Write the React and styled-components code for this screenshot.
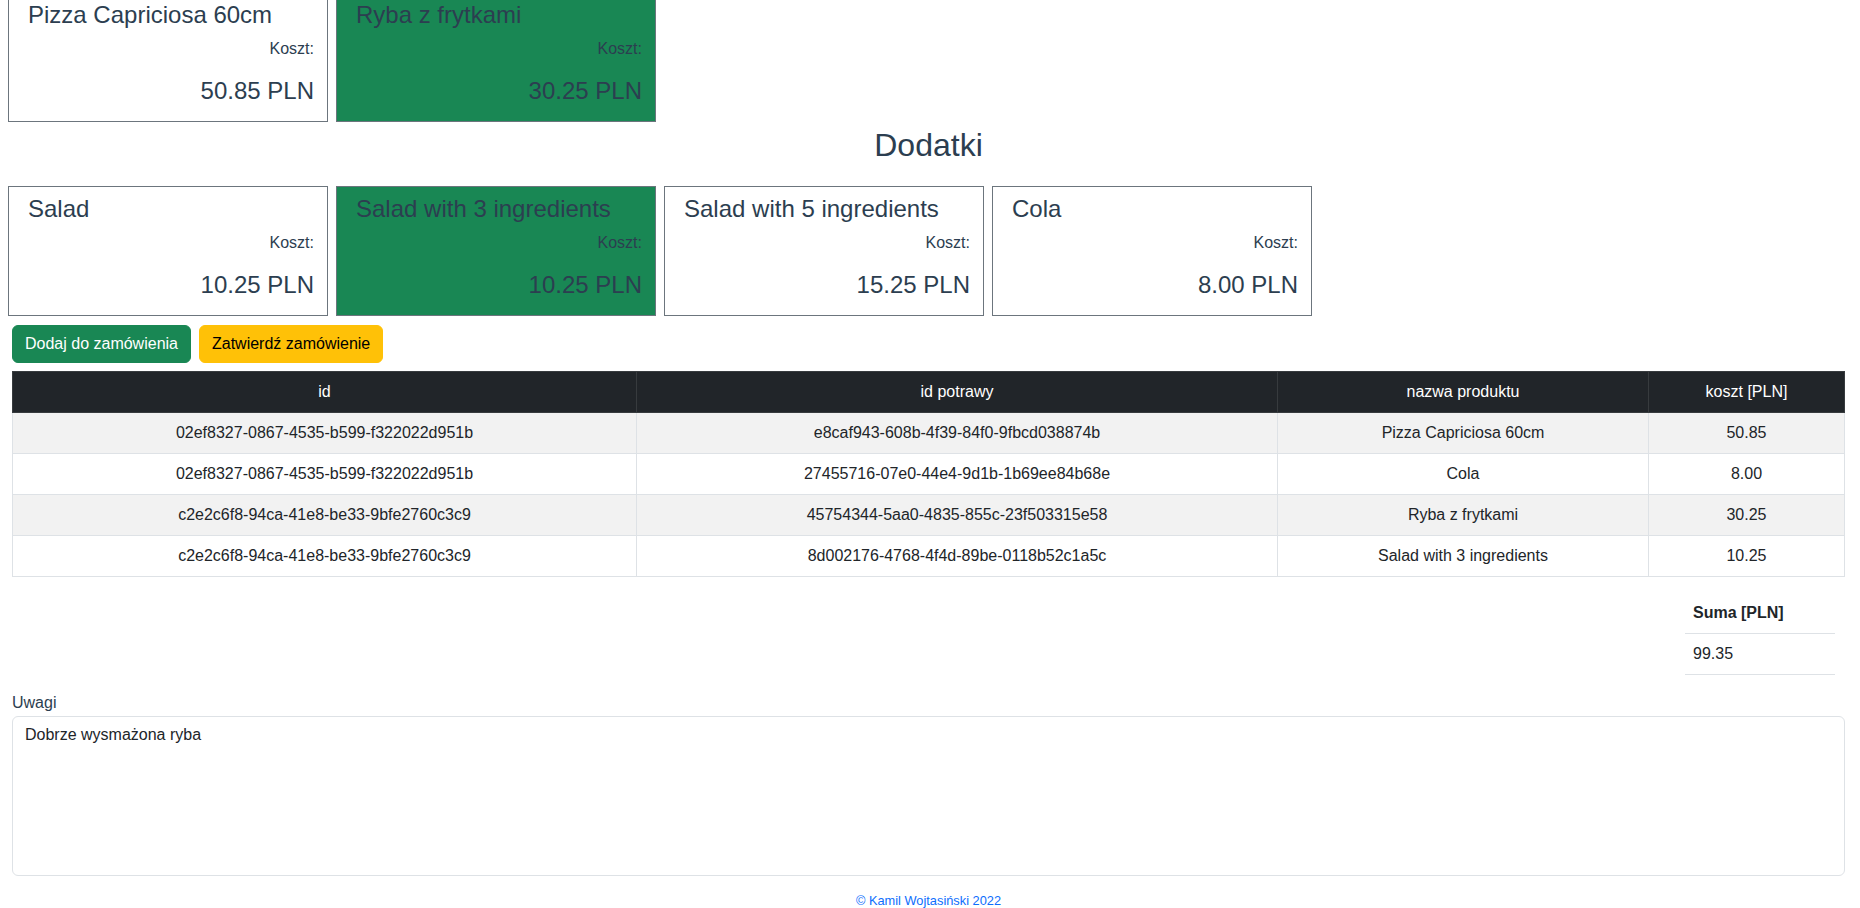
import React from "react";
import styled, { createGlobalStyle } from "styled-components";

const GlobalStyle = createGlobalStyle`
  *, *::before, *::after { box-sizing: border-box; }
  html, body {
    margin: 0;
    padding: 0;
    overflow: hidden;
    background: #fff;
  }
  body {
    font-family: "Liberation Sans", Arial, Helvetica, sans-serif;
    font-size: 16px;
    line-height: 1.5;
    color: #212529;
  }
  table { font-family: inherit; font-size: inherit; }
`;

const Page = styled.div`
  /* view is scrolled slightly: first row of cards starts above the fold */
  margin-top: -8px;
  padding: 0 15px 0 12px;
  color: #2c3e50;
  text-align: center;
`;

const CardRow = styled.div`
  display: flex;
  flex-wrap: wrap;
  gap: 8px;
  margin: 0 -4px 4px;
`;

const Card = styled.div`
  width: 320px;
  height: 130px;
  border: 1px solid #6c757d;
  background: ${(p) => (p.$selected ? "#198754" : "#ffffff")};
  padding: 8px 13px 0;
  text-align: left;
  color: #2c3e50;
  cursor: pointer;
`;

const CardTitle = styled.h4`
  margin: 0 0 0 6px;
  font-size: 24px;
  line-height: 28.8px;
  font-weight: 400;
  white-space: nowrap;
`;

const CostLabel = styled.p`
  margin: 7.4px 0 0;
  text-align: right;
  font-size: 16px;
  line-height: 24px;
`;

const Price = styled.p`
  margin: 12px 0 0;
  text-align: right;
  font-size: 24px;
  line-height: 36px;
`;

const SectionTitle = styled.h2`
  margin: 0 0 21.6px;
  font-size: 32px;
  line-height: 38.4px;
  font-weight: 400;
  color: #2c3e50;
`;

const ButtonBar = styled.div`
  display: flex;
  gap: 8px;
  margin-top: 9px;
`;

const Button = styled.button`
  height: 38px;
  padding: 6px 12px;
  font-family: "Liberation Sans", Arial, sans-serif;
  font-size: 16px;
  line-height: 24px;
  border-radius: 6px;
  border: 1px solid ${(p) => (p.$variant === "warning" ? "#ffc107" : "#198754")};
  background: ${(p) => (p.$variant === "warning" ? "#ffc107" : "#198754")};
  color: ${(p) => (p.$variant === "warning" ? "#000000" : "#ffffff")};
  cursor: pointer;
`;

const OrderTable = styled.table`
  width: 100%;
  margin: 8px 0 16px;
  border-collapse: collapse;
  table-layout: fixed;
  color: #212529;
  text-align: center;
  border: 1px solid #dee2e6;
`;

const Col = styled.col`
  width: ${(p) => p.$w || "auto"};
`;

const HeadCell = styled.th`
  padding: 8px;
  background: #212529;
  color: #ffffff;
  font-weight: 400;
  line-height: 24px;
  text-align: center;
  border: 1px solid #373b3e;
`;

const BodyRow = styled.tr`
  background: ${(p) => (p.$striped ? "#f2f2f2" : "#ffffff")};
`;

const Cell = styled.td`
  padding: 8px;
  line-height: 24px;
  text-align: center;
  border: 1px solid #dee2e6;
  white-space: nowrap;
`;

const SumWrap = styled.div`
  display: flex;
  justify-content: flex-end;
  padding-right: 10px;
  margin-bottom: 16px;
`;

const SumTable = styled.table`
  width: 150px;
  border-collapse: collapse;
  text-align: left;
  color: #212529;
`;

const SumHead = styled.th`
  padding: 8px;
  font-weight: 700;
  line-height: 24px;
  text-align: left;
  border-bottom: 1px solid #dee2e6;
`;

const SumCell = styled.td`
  padding: 8px;
  line-height: 24px;
  border-bottom: 1px solid #dee2e6;
`;

const NoteLabel = styled.label`
  display: block;
  text-align: left;
  line-height: 24px;
  color: #2c3e50;
`;

const NoteArea = styled.textarea`
  display: block;
  width: 100%;
  height: 160px;
  margin-top: 1px;
  padding: 6px 12px;
  font-family: "Liberation Sans", Arial, sans-serif;
  font-size: 16px;
  line-height: 24px;
  color: #212529;
  border: 1px solid #dee2e6;
  border-radius: 6px;
  resize: none;
  outline: none;
`;

const Footer = styled.footer`
  margin-top: 15px;
  font-size: 12.8px;
  line-height: 1.5;
`;

const FooterLink = styled.a`
  color: #0d6efd;
  text-decoration: none;
`;

const mains = [
  { name: "Pizza Capriciosa 60cm", price: "50.85", selected: false },
  { name: "Ryba z frytkami", price: "30.25", selected: true },
];

const extras = [
  { name: "Salad", price: "10.25", selected: false },
  { name: "Salad with 3 ingredients", price: "10.25", selected: true },
  { name: "Salad with 5 ingredients", price: "15.25", selected: false },
  { name: "Cola", price: "8.00", selected: false },
];

const orderRows = [
  ["02ef8327-0867-4535-b599-f322022d951b", "e8caf943-608b-4f39-84f0-9fbcd038874b", "Pizza Capriciosa 60cm", "50.85"],
  ["02ef8327-0867-4535-b599-f322022d951b", "27455716-07e0-44e4-9d1b-1b69ee84b68e", "Cola", "8.00"],
  ["c2e2c6f8-94ca-41e8-be33-9bfe2760c3c9", "45754344-5aa0-4835-855c-23f503315e58", "Ryba z frytkami", "30.25"],
  ["c2e2c6f8-94ca-41e8-be33-9bfe2760c3c9", "8d002176-4768-4f4d-89be-0118b52c1a5c", "Salad with 3 ingredients", "10.25"],
];

function ProductCard({ item }) {
  return (
    <Card $selected={item.selected}>
      <CardTitle>{item.name}</CardTitle>
      <CostLabel>Koszt:</CostLabel>
      <Price>{item.price} PLN</Price>
    </Card>
  );
}

export default function App() {
  return (
    <>
      <GlobalStyle />
      <Page>
        <CardRow>
          {mains.map((m) => (
            <ProductCard key={m.name} item={m} />
          ))}
        </CardRow>
        <SectionTitle>Dodatki</SectionTitle>
        <CardRow>
          {extras.map((m) => (
            <ProductCard key={m.name} item={m} />
          ))}
        </CardRow>
        <ButtonBar>
          <Button $variant="success">Dodaj do zamówienia</Button>
          <Button $variant="warning">Zatwierdź zamówienie</Button>
        </ButtonBar>
        <OrderTable>
          <colgroup>
            <Col $w="624px" />
            <Col $w="641px" />
            <Col $w="371px" />
            <Col />
          </colgroup>
          <thead>
            <tr>
              <HeadCell>id</HeadCell>
              <HeadCell>id potrawy</HeadCell>
              <HeadCell>nazwa produktu</HeadCell>
              <HeadCell>koszt [PLN]</HeadCell>
            </tr>
          </thead>
          <tbody>
            {orderRows.map((r, i) => (
              <BodyRow key={i} $striped={i % 2 === 0}>
                {r.map((c, j) => (
                  <Cell key={j}>{c}</Cell>
                ))}
              </BodyRow>
            ))}
          </tbody>
        </OrderTable>
        <SumWrap>
          <SumTable>
            <thead>
              <tr>
                <SumHead>Suma [PLN]</SumHead>
              </tr>
            </thead>
            <tbody>
              <tr>
                <SumCell>99.35</SumCell>
              </tr>
            </tbody>
          </SumTable>
        </SumWrap>
        <NoteLabel htmlFor="uwagi">Uwagi</NoteLabel>
        <NoteArea id="uwagi" defaultValue="Dobrze wysmażona ryba" />
        <Footer>
          <FooterLink href="#">© Kamil Wojtasiński 2022</FooterLink>
        </Footer>
      </Page>
    </>
  );
}
